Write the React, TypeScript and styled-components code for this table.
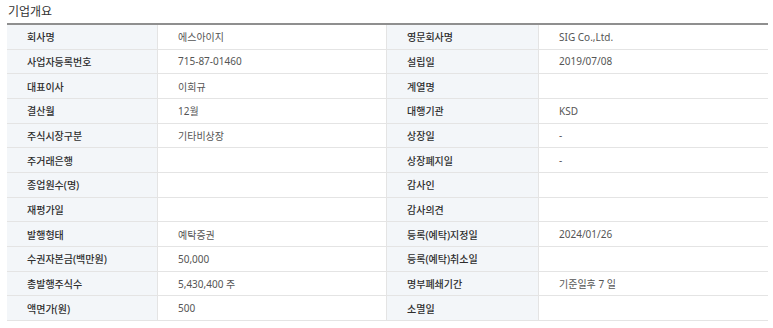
import React from "react";
import styled, { createGlobalStyle } from "styled-components";

const GlobalStyle = createGlobalStyle`
  html, body {
    margin: 0;
    padding: 0;
    background: #fff;
  }
  body {
    font-family: "Noto Sans", "Noto Sans CJK KR", sans-serif;
  }
`;

const Container = styled.div`
  width: 773px;
  height: 328px;
  padding: 3px 5px 0 7px;
  box-sizing: border-box;
  display: flex;
  flex-direction: column;
`;

const Title = styled.h3`
  margin: 0 0 0 1px;
  height: 20px;
  font-size: 12px;
  font-weight: 400;
  line-height: 18px;
  color: #333;
`;

const Table = styled.div`
  display: grid;
  grid-template-columns: 151px 229px 152px 229px;
  grid-auto-rows: 24.67px;
  border-top: 2px solid #8f8f8f;
`;

const Cell = styled.div<{ head?: boolean; last?: boolean }>`
  display: flex;
  align-items: center;
  padding-left: 20px;
  box-sizing: border-box;
  font-size: 10px;
  border-bottom: 1px solid #e4e4e4;
  border-right: ${({ last }) => (last ? "none" : "1px solid #e4e4e4")};
  background: ${({ head }) => (head ? "#f3f6f9" : "#fff")};
  color: ${({ head }) => (head ? "#2e2e2e" : "#555")};
  font-weight: ${({ head }) => (head ? 500 : 400)};
  white-space: nowrap;
`;

const rows: [string, string, string, string][] = [
  ["회사명", "에스아이지", "영문회사명", "SIG Co.,Ltd."],
  ["사업자등록번호", "715-87-01460", "설립일", "2019/07/08"],
  ["대표이사", "이희규", "계열명", ""],
  ["결산월", "12월", "대행기관", "KSD"],
  ["주식시장구분", "기타비상장", "상장일", "-"],
  ["주거래은행", "", "상장폐지일", "-"],
  ["종업원수(명)", "", "감사인", ""],
  ["재평가일", "", "감사의견", ""],
  ["발행형태", "예탁증권", "등록(예탁)지정일", "2024/01/26"],
  ["수권자본금(백만원)", "50,000", "등록(예탁)취소일", ""],
  ["총발행주식수", "5,430,400 주", "명부폐쇄기간", "기준일후 7 일"],
  ["액면가(원)", "500", "소멸일", ""],
];

const App = () => {
  return (
    <>
      <GlobalStyle />
      <Container>
        <Title>기업개요</Title>
        <Table>
          {rows.map(([h1, v1, h2, v2]) => (
            <React.Fragment key={h1}>
              <Cell head>{h1}</Cell>
              <Cell>{v1}</Cell>
              <Cell head>{h2}</Cell>
              <Cell last>{v2}</Cell>
            </React.Fragment>
          ))}
        </Table>
      </Container>
    </>
  );
};

export default App;
